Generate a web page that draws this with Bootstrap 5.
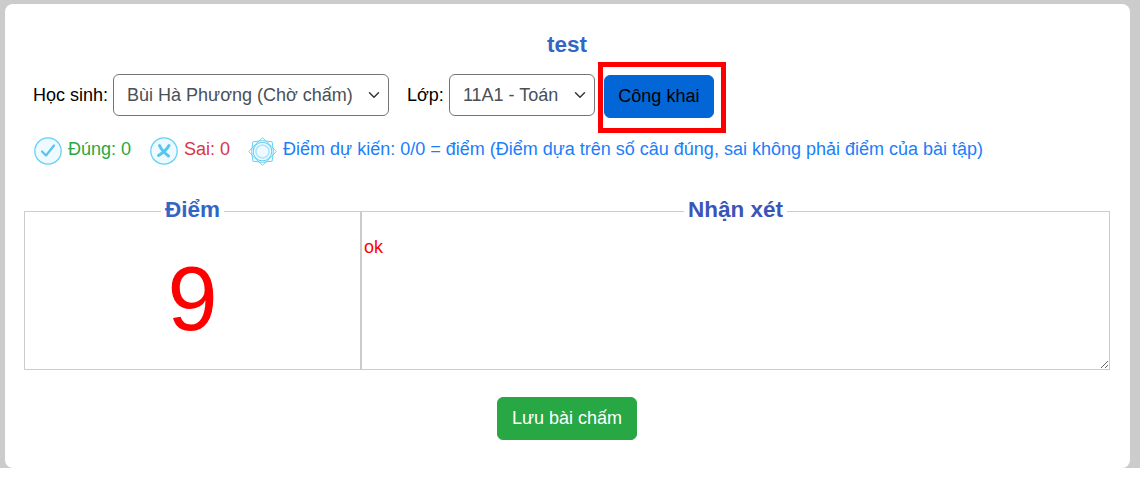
<!DOCTYPE html>
<html lang="vi">
<head>
<meta charset="utf-8">
<title>test</title>
<link href="https://cdn.jsdelivr.net/npm/bootstrap@5.3.0/dist/css/bootstrap.min.css" rel="stylesheet">
<style>
html, body { height: 100%; background: #fff; overflow: hidden; }
body { font-family: "Liberation Sans", Arial, sans-serif; font-size: 18px; color: #000; }
.page-shade { background: #ccc; height: 468px; padding: 4px 10px 0 5px; }
.sheet { background: #fff; height: 464px; border-radius: 8px; padding: 28px 20px 0 19px; }
.sheet-title { font-size: 22.5px; font-weight: 700; color: #3366c4; line-height: 25px; margin: 0 0 17px; text-align: center; }
.pick-row { padding-left: 9px; height: 44px; }
.pick-label { font-size: 18px; margin: 0 5px 0 0; height: 42px; }
.pick-select { font-size: 18px; color: #495057; border-color: #757575; height: 42px; padding: 0 26px 0 13px; background-position: right 7px center; background-size: 14px 12px; }
.pick-select.student { width: 276px; }
.pick-select.klass { width: 146px; margin-right: 9px; }
.pick-gap { margin-left: 18px; }
.public-wrap { position: relative; margin-top: 1px; }
.public-btn { background: #0366d6; border-color: #0366d6; color: #000; font-size: 18px; width: 110px; height: 43px; padding: 0; border-radius: 6px; }
.public-mark { position: absolute; left: -6px; top: -13px; width: 128px; height: 71px; border: 5px solid #f00; pointer-events: none; }
.stat-row { padding-left: 10px; margin-top: 15px; font-size: 18px; height: 32px; }
.stat-row svg { display: block; flex: none; margin: 4px 6px 0 0; }
.stat-row svg.stat-x { margin-left: 19px; }
.stat-row svg.stat-star { margin-left: 18px; }
.stat-ok { color: #28a745; }
.stat-bad { color: #dc3545; }
.stat-info { color: #1a7efb; }
.grade-row { margin-top: 33px; }
.grade-box { border: 1px solid #ccc; margin: 0; padding: 0; min-width: 0; height: 172px; }
.grade-box legend { float: none; width: auto; margin: 0 auto; padding: 0 4px 2px; font-size: 22.5px; font-weight: 700; line-height: 24px; }
.box-score { width: 337px; flex: none; color: #3366c4; }
.box-note { flex: 1 1 auto; color: #3b55b8; }
.score-val { color: #f00; font-size: 90px; line-height: 110px; text-align: center; margin-top: 20px; }
.note-input { display: block; width: 100%; height: 145px; border: 0; outline: 0; padding: 13px 2px 0; color: #f00; font-size: 18px; line-height: 20px; background: transparent; font-family: inherit; }
.save-row { margin-top: 27px; }
.save-btn { background: #28a745; border-color: #28a745; color: #fff; font-size: 18px; width: 140px; height: 43px; padding: 0; border-radius: 6px; }
</style>
</head>
<body>
<div class="page-shade">
  <div class="sheet">
    <h1 class="sheet-title">test</h1>
    <div class="pick-row d-flex align-items-start">
      <label class="pick-label d-flex align-items-center" for="hs">Học sinh:</label>
      <select id="hs" class="form-select pick-select student"><option>Bùi Hà Phương (Chờ chấm)</option></select>
      <label class="pick-label pick-gap d-flex align-items-center" for="lop">Lớp:</label>
      <select id="lop" class="form-select pick-select klass"><option>11A1 - Toán</option></select>
      <div class="public-wrap">
        <button type="button" class="btn public-btn">Công khai</button>
        <span class="public-mark"></span>
      </div>
    </div>
    <div class="stat-row d-flex align-items-center">
      <svg width="28" height="28" viewBox="0 0 28 28"><circle cx="14" cy="14" r="13.2" fill="#eefaff" stroke="#62d2f3" stroke-width="1.3"/><path d="M8 14.5 L12 18.5 L20 8.5" fill="none" stroke="#55c6ee" stroke-width="2.2" stroke-linecap="round" stroke-linejoin="round"/></svg>
      <span class="stat-ok">Đúng: 0</span>
      <svg width="28" height="28" viewBox="0 0 28 28" class="stat-x"><circle cx="14" cy="14" r="13.2" fill="#eefaff" stroke="#62d2f3" stroke-width="1.3"/><path d="M9.5 8.5 Q12 14 18.5 19 M19 8.5 Q16 14 8.5 18.5" fill="none" stroke="#55c6ee" stroke-width="3" stroke-linecap="round"/></svg>
      <span class="stat-bad">Sai: 0</span>
      <svg width="29" height="29" viewBox="0 0 30 30" class="stat-star"><circle cx="15" cy="15" r="6.8" fill="#eefaff" stroke="#62d2f3" stroke-width="1.6"/><circle cx="15" cy="15" r="9.6" fill="#eefaff" fill-opacity=".5" stroke="#62d2f3" stroke-width="1.1"/><path d="M5 5 Q15 2.5 25 5 Q27.5 15 25 25 Q15 27.5 5 25 Q2.5 15 5 5 Z" fill="none" stroke="#62d2f3" stroke-width="1" stroke-linejoin="round"/><path d="M15 .8 Q22.5 7 29.2 15 Q22.5 23 15 29.2 Q7.5 23 .8 15 Q7.5 7 15 .8 Z" fill="none" stroke="#62d2f3" stroke-width="1" stroke-linejoin="round"/></svg>
      <span class="stat-info">Điểm dự kiến: 0/0 = điểm (Điểm dựa trên số câu đúng, sai không phải điểm của bài tập)</span>
    </div>
    <div class="grade-row d-flex">
      <fieldset class="grade-box box-score">
        <legend>Điểm</legend>
        <div class="score-val">9</div>
      </fieldset>
      <fieldset class="grade-box box-note">
        <legend>Nhận xét</legend>
        <textarea class="note-input">ok</textarea>
      </fieldset>
    </div>
    <div class="save-row text-center">
      <button type="button" class="btn save-btn">Lưu bài chấm</button>
    </div>
  </div>
</div>
</body>
</html>
